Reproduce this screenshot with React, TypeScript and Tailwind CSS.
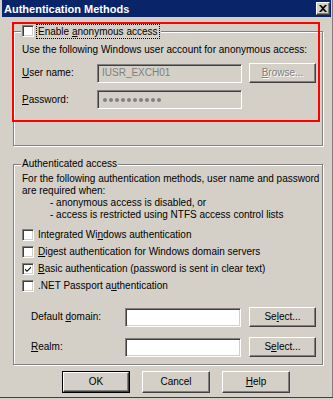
import React from "react";

const sunken =
  "border border-t-[#808080] border-l-[#808080] border-b-white border-r-white shadow-[inset_1px_1px_0_#404040,inset_-1px_-1px_0_#d4d0c8]";
const raised =
  "border border-t-white border-l-white border-b-[#404040] border-r-[#404040] shadow-[inset_-1px_-1px_0_#808080]";
const etched =
  "border border-[#808080] shadow-[inset_1px_1px_0_#ffffff,1px_1px_0_#ffffff]";

function Check({ checked = false }: { checked?: boolean }) {
  return (
    <span className={`w-[12px] h-[12px] bg-white shrink-0 flex items-center justify-center ${sunken}`}>
      {checked && (
        <svg width="8" height="8" viewBox="0 0 8 8">
          <path d="M1 3.5 L3 5.5 L7 1.5 L7 3 L3 7 L1 5 Z" fill="#000" />
        </svg>
      )}
    </span>
  );
}

function CheckRow({ checked, children }: { checked?: boolean; children: React.ReactNode }) {
  return (
    <div className="flex items-center h-[17px] pl-[8px]">
      <Check checked={checked} />
      <span className="ml-[4px]">{children}</span>
    </div>
  );
}

function Btn({ children, w = "w-[67px]", h = "h-[20px]", disabled = false, def = false }: { children: React.ReactNode; w?: string; h?: string; disabled?: boolean; def?: boolean }) {
  return (
    <div className={`${def ? "border border-black" : ""} shrink-0`}>
      <div
        className={`${w} ${h} bg-[#d4d0c8] flex items-center justify-center ${raised} ${
          disabled ? "text-[#808080] [text-shadow:1px_1px_0_#fff]" : ""
        }`}
      >
        {children}
      </div>
    </div>
  );
}

export default function App() {
  return (
    <div className="w-[333px] h-[400px] bg-[#d4d0c8] relative overflow-hidden font-['Liberation_Sans',Arial,sans-serif] text-[10px] leading-[12px] text-black">
      {/* title bar */}
      <div className="mx-[2px] h-[17px] bg-[#0a246a] flex items-center justify-between pl-[2px] pr-[1px]">
        <span className="text-white font-bold text-[11px]">Authentication Methods</span>
        <div className={`w-[14px] h-[13px] bg-[#d4d0c8] flex items-center justify-center ${raised}`}>
          <svg width="8" height="7" viewBox="0 0 8 7">
            <path d="M0 0h2l2 2 2-2h2L5 3.5 8 7H6L4 5 2 7H0l3-3.5Z" fill="#000" />
          </svg>
        </div>
      </div>

      {/* anonymous access group */}
      <div className={`mt-[14px] ml-[13px] w-[310px] h-[115px] ${etched}`}>
        <div className="-mt-[8px] h-[14px] ml-[7px] flex items-center">
          <div className="flex items-center bg-[#d4d0c8] pl-[1px] pr-[2px]">
            <Check />
            <span className="ml-[3px] px-[1px] outline outline-1 outline-dotted outline-black leading-[13px]">
              Enable <u>a</u>nonymous access
            </span>
          </div>
        </div>
        <div className="mt-[6px] pl-[8px]">Use the following Windows user account for anonymous access:</div>
        <div className="mt-[7px] pl-[8px] flex items-center">
          <span className="w-[75px]">
            <u>U</u>ser name:
          </span>
          <div className={`w-[145px] h-[19px] bg-[#d4d0c8] text-[#808080] flex items-center pl-[4px] ${sunken}`}>IUSR_EXCH01</div>
          <div className="ml-[7px]">
            <Btn disabled>
              <span>
                <u>B</u>rowse...
              </span>
            </Btn>
          </div>
        </div>
        <div className="mt-[7px] pl-[8px] flex items-center">
          <span className="w-[75px]">
            <u>P</u>assword:
          </span>
          <div className={`w-[145px] h-[19px] bg-[#d4d0c8] text-[#808080] flex items-center pl-[5px] gap-[2px] ${sunken}`}>
            {Array.from({ length: 10 }).map((_, i) => (
              <span key={i} className="w-[4px] h-[4px] rounded-full bg-[#808080]" />
            ))}
          </div>
        </div>
      </div>

      {/* authenticated access group */}
      <div className={`mt-[18px] ml-[13px] w-[310px] h-[201px] ${etched}`}>
        <div className="-mt-[7px] h-[12px] ml-[7px] flex">
          <span className="bg-[#d4d0c8] px-[1px]">Authenticated access</span>
        </div>
        <div className="mt-[3px] pl-[8px] leading-[12px]">
          <div>For the following authentication methods, user name and password</div>
          <div>are required when:</div>
          <div className="pl-[28px]">- anonymous access is disabled, or</div>
          <div className="pl-[28px]">- access is restricted using NTFS access control lists</div>
        </div>
        <div className="mt-[5px]">
          <CheckRow>
            Integrated Wi<u>n</u>dows authentication
          </CheckRow>
          <CheckRow>
            <u>D</u>igest authentication for Windows domain servers
          </CheckRow>
          <CheckRow checked>
            <u>B</u>asic authentication (password is sent in clear text)
          </CheckRow>
          <CheckRow>
            .NET Passport a<u>u</u>thentication
          </CheckRow>
        </div>
        <div className="mt-[13px] pl-[17px] flex items-center">
          <span className="w-[94px]">
            Default <u>d</u>omain:
          </span>
          <div className={`w-[116px] h-[19px] bg-white ${sunken}`} />
          <div className="ml-[8px]">
            <Btn>
              <span>
                Se<u>l</u>ect...
              </span>
            </Btn>
          </div>
        </div>
        <div className="mt-[10px] pl-[17px] flex items-center">
          <span className="w-[94px]">
            <u>R</u>ealm:
          </span>
          <div className={`w-[116px] h-[19px] bg-white ${sunken}`} />
          <div className="ml-[8px]">
            <Btn>
              <span>
                S<u>e</u>lect...
              </span>
            </Btn>
          </div>
        </div>
      </div>

      {/* dialog buttons */}
      <div className="mt-[6px] ml-[62px] flex gap-[12px]">
        <Btn def w="w-[66px]" h="h-[20px]">OK</Btn>
        <Btn w="w-[68px]" h="h-[22px]">Cancel</Btn>
        <Btn w="w-[68px]" h="h-[22px]">
          <span>
            <u>H</u>elp
          </span>
        </Btn>
      </div>

      <div className="absolute left-0 right-0 top-[397px] h-px bg-[#404040]" />
      <div className="absolute top-0 bottom-[3px] right-0 w-px bg-[#808080]" />

      {/* red annotation */}
      <div className="absolute left-[12px] top-[22px] w-[308px] h-[100px] border-2 border-[#ff0000]" />
    </div>
  );
}
